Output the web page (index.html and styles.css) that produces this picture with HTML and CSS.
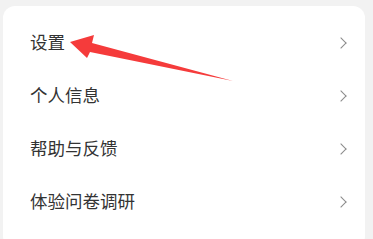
FILE: index.html
```html
<!DOCTYPE html>
<html lang="zh-CN">
<head>
  <meta charset="UTF-8">
  <title>设置</title>
  <link rel="stylesheet" href="styles.css">
</head>
<body>
  <div class="card">
    <div class="row"><span class="label">设置</span><span class="chevron"></span></div>
    <div class="row"><span class="label">个人信息</span><span class="chevron"></span></div>
    <div class="row"><span class="label">帮助与反馈</span><span class="chevron"></span></div>
    <div class="row"><span class="label">体验问卷调研</span><span class="chevron"></span></div>
  </div>

  <svg class="arrow" width="373" height="239" viewBox="0 0 373 239">
    <polygon points="70,42 94,35 92,43 233,81 90,52 87,58" fill="#f53b3b"/>
  </svg>
</body>
</html>
```

FILE: styles.css
```css
* {
  box-sizing: border-box;
}

body {
  margin: 0;
  padding: 6px 8px 0 3px;
  background: #f2f2f2;
  font-family: "Noto Sans CJK SC", "Noto Sans", sans-serif;
  height: 239px;
  overflow: hidden;
}

.card {
  background: #ffffff;
  border-radius: 12px;
  width: 362px;
  padding: 10px 17px 20px 27px;
}

.row {
  height: 53px;
  display: flex;
  align-items: center;
  justify-content: space-between;
}

.label {
  font-size: 17.5px;
  line-height: 20px;
  color: #333333;
  margin-top: -2px;
}

.chevron {
  width: 8px;
  height: 8px;
  border-top: 1.5px solid #8a8a8a;
  border-right: 1.5px solid #8a8a8a;
  transform: rotate(45deg);
  margin-right: 3px;
}

.arrow {
  position: absolute;
  left: 0;
  top: 0;
}
```
